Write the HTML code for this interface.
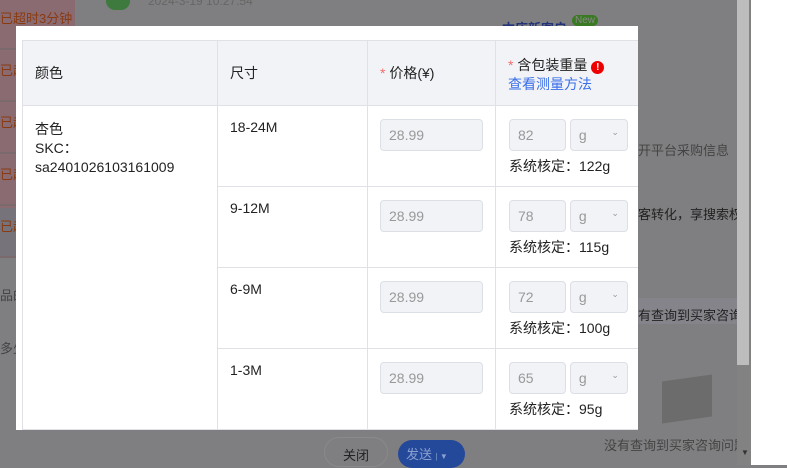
<!DOCTYPE html>
<html><head><meta charset="utf-8"><style>
*{margin:0;padding:0;box-sizing:border-box}
body{width:787px;height:465px;overflow:hidden;background:#7f7f81;font-family:"Liberation Sans","Noto Sans CJK SC",sans-serif;position:relative;font-size:14px;color:#222}
.abs{position:absolute}
.side{left:0;top:0;width:75px;height:258px;background:#8a6b72}
.side div{position:absolute;left:0;width:75px;height:50px;border-bottom:2px solid #7a6a6e;color:#8a3a10;font-size:13px;padding-top:8px;white-space:nowrap;overflow:hidden}
.modal{left:16px;top:26px;width:622px;height:404px;background:#fff;overflow:hidden}
table{position:absolute;left:6px;top:14px;border-collapse:collapse;table-layout:fixed;width:623px}
td,th{border:1px solid #dfe1e6;vertical-align:top;text-align:left;font-weight:normal}
th{background:#f2f3f7;height:65px;vertical-align:middle;padding-left:12px}
td{height:81px;padding:13px 12px 0 12px}
td.w{padding-left:13px}
.inp{display:inline-block;height:32px;border:1px solid #dcdfe6;background:#f2f3f7;border-radius:4px;color:#999;padding:7px 8px;font-size:14px;vertical-align:top}
.star{color:#f56c6c}
</style></head><body>
<div class="abs side">
<div style="top:0">已超时3分钟</div><div style="top:52px">已超</div><div style="top:104px">已超</div><div style="top:156px">已超</div><div style="top:208px;background:#76747a">已超</div>
</div>
<div class="abs" style="left:0;top:285px;color:#444;font-size:13px">品的</div>
<div class="abs" style="left:0;top:338px;color:#444;font-size:13px">多少</div>
<div class="abs" style="left:106px;top:-8px;width:24px;height:18px;border-radius:12px;background:#3e7a3e"></div>
<div class="abs" style="left:148px;top:-6px;color:#666;font-size:12px">2024-3-19 10:27:54</div>
<div class="abs" style="left:502px;top:18px;color:#223377;font-size:13px;font-weight:bold">本店新客户</div>
<div class="abs" style="left:572px;top:15px;background:#3a7a22;color:#888;font-size:10px;padding:0 3px;border-radius:6px">New</div>
<div class="abs" style="left:638px;top:140px;color:#444;font-size:13px">开平台采购信息</div>
<div class="abs" style="left:638px;top:204px;color:#222;font-size:13px">客转化，享搜索权益</div>
<div class="abs" style="left:638px;top:298px;width:100px;height:26px;background:#84848a"></div>
<div class="abs" style="left:638px;top:305px;color:#222;font-size:13px">有查询到买家咨询</div>
<div class="abs" style="left:662px;top:378px;width:50px;height:42px;background:#6c6c6c;transform:skewY(-8deg)"></div>
<div class="abs" style="left:604px;top:435px;color:#444;font-size:13px">没有查询到买家咨询问题</div>
<div class="abs" style="left:737px;top:0;width:14px;height:465px;background:#828282"></div>
<div class="abs" style="left:737px;top:0;width:12px;height:365px;background:#bdbdbd"></div>
<div class="abs" style="left:741px;top:448px;font-size:8px;color:#333">▼</div>
<div class="abs" style="left:751px;top:0;width:36px;height:465px;background:#fff"></div>
<div class="abs" style="left:324px;top:437px;width:64px;height:30px;border:1px solid #8a8a8a;border-radius:15px;background:#7f7f81;font-size:13px;padding-top:7px;text-align:center;color:#222">关闭</div>
<div class="abs" style="left:398px;top:440px;width:67px;height:28px;border-radius:14px;background:#24489a;font-size:13px;padding:4px 0 0 8px;color:#8aa0d0">发送 <span style="font-size:8px">| ▼</span></div>
<div class="abs modal">
<table>
<colgroup><col style="width:195px"><col style="width:150px"><col style="width:128px"><col style="width:150px"></colgroup>
<tr><th>颜色</th><th>尺寸</th><th><span class="star">*</span> 价格(¥)</th><th style="padding-top:3px;line-height:19px"><span class="star">*</span> 含包装重量 <span style="display:inline-block;width:13px;height:13px;border-radius:7px;background:#e00;color:#fff;font-size:10px;text-align:center;line-height:13px;font-weight:bold">!</span><br><span style="color:#3a6fe8">查看测量方法</span></th></tr>
<tr><td rowspan="4" style="line-height:19px;padding-top:14px">杏色<br>SKC：<br>sa2401026103161009</td><td>18-24M</td><td><span class="inp" style="width:103px">28.99</span></td><td class="w"><span class="inp" style="width:57px">82</span> <span class="inp" style="width:58px;margin-left:0">g <span style="float:right;font-size:9px;color:#999">⌄</span></span><div style="margin-top:5px">系统核定：122g</div></td></tr>
<tr><td>9-12M</td><td><span class="inp" style="width:103px">28.99</span></td><td class="w"><span class="inp" style="width:57px">78</span> <span class="inp" style="width:58px">g <span style="float:right;font-size:9px;color:#999">⌄</span></span><div style="margin-top:5px">系统核定：115g</div></td></tr>
<tr><td>6-9M</td><td><span class="inp" style="width:103px">28.99</span></td><td class="w"><span class="inp" style="width:57px">72</span> <span class="inp" style="width:58px">g <span style="float:right;font-size:9px;color:#999">⌄</span></span><div style="margin-top:5px">系统核定：100g</div></td></tr>
<tr><td>1-3M</td><td><span class="inp" style="width:103px">28.99</span></td><td class="w"><span class="inp" style="width:57px">65</span> <span class="inp" style="width:58px">g <span style="float:right;font-size:9px;color:#999">⌄</span></span><div style="margin-top:5px">系统核定：95g</div></td></tr>
</table>
</div>
</body></html>
